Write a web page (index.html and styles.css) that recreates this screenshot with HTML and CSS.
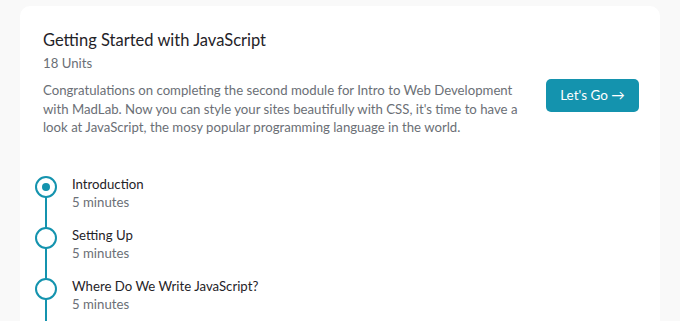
FILE: index.html
```html
<!DOCTYPE html>
<html lang="en">
  <head>
    <meta charset="UTF-8" />
    <meta name="viewport" content="width=device-width, initial-scale=1.0" />
    <title>Getting Started with JavaScript</title>
    <link rel="stylesheet" href="styles.css">
  </head>
  <body>
    <div class="card">
      <div class="course-head">
        <div class="course-info">
          <h2 class="course-title">Getting Started with JavaScript</h2>
          <div class="course-units">18 Units</div>
          <p class="course-desc">Congratulations on completing the second module for Intro to Web Development with MadLab. Now you can style your sites beautifully with CSS, it's time to have a look at JavaScript, the mosy popular programming language in the world.</p>
        </div>
        <button class="go-btn">Let's Go &#8594;</button>
      </div>

      <ul class="timeline">
        <li class="step active">
          <span class="dot"></span>
          <div class="step-text">
            <div class="step-title">Introduction</div>
            <div class="step-time">5 minutes</div>
          </div>
        </li>
        <li class="step">
          <span class="dot"></span>
          <div class="step-text">
            <div class="step-title">Setting Up</div>
            <div class="step-time">5 minutes</div>
          </div>
        </li>
        <li class="step">
          <span class="dot"></span>
          <div class="step-text">
            <div class="step-title">Where Do We Write JavaScript?</div>
            <div class="step-time">5 minutes</div>
          </div>
        </li>
      </ul>
    </div>
  </body>
</html>
```

FILE: styles.css
```css
:root {
  --accent: #1493ae;
  --text-dark: #1f2328;
  --text-muted: #6b6f76;
}
html,
body {
  padding: 0;
  margin: 0;
}
body {
  background-color: #f9f9f9;
  font-family: Lato, "Liberation Sans", sans-serif;
  color: var(--text-dark);
  padding: 6px 20px 0;
  height: 321px;
  overflow: hidden;
  box-sizing: border-box;
}

.card {
  background-color: #fff;
  border-radius: 10px;
  padding: 22px 21px 40px 23px;
  min-height: 400px;
}

.course-head {
  display: flex;
  align-items: flex-start;
  justify-content: space-between;
}
.course-info {
  width: 482px;
}
.course-title {
  margin: 0;
  font-size: 16.5px;
  font-weight: 400;
  line-height: 24px;
}
.course-units {
  font-size: 13.2px;
  color: var(--text-muted);
  margin-top: 3px;
}
.course-desc {
  margin: 10px 0 0;
  font-size: 13.2px;
  line-height: 18.5px;
  color: var(--text-muted);
}

.go-btn {
  font: inherit;
  font-size: 13.5px;
  line-height: 17px;
  color: #fff;
  background-color: var(--accent);
  border: none;
  border-radius: 5px;
  padding: 8px 14px;
  width: 93px;
  margin-top: 51px;
  cursor: pointer;
}

.timeline {
  list-style: none;
  margin: 38px 0 0 -8px;
  padding: 0;
}
.step {
  display: flex;
  align-items: flex-start;
  gap: 15px;
  position: relative;
  padding-bottom: 15px;
}
.step::before {
  content: "";
  position: absolute;
  left: 10px;
  top: 20px;
  bottom: -20px;
  width: 2px;
  background-color: var(--accent);
}
.dot {
  flex: none;
  width: 18px;
  height: 18px;
  border: 2px solid var(--accent);
  border-radius: 50%;
  background-color: #fff;
  margin-top: 1px;
  position: relative;
  z-index: 1;
  display: grid;
  place-items: center;
}
.step.active .dot::after {
  content: "";
  width: 8px;
  height: 8px;
  border-radius: 50%;
  background-color: var(--accent);
}
.step-title {
  font-size: 13.2px;
  line-height: 18px;
}
.step-time {
  font-size: 13.2px;
  line-height: 18px;
  color: var(--text-muted);
}
```
